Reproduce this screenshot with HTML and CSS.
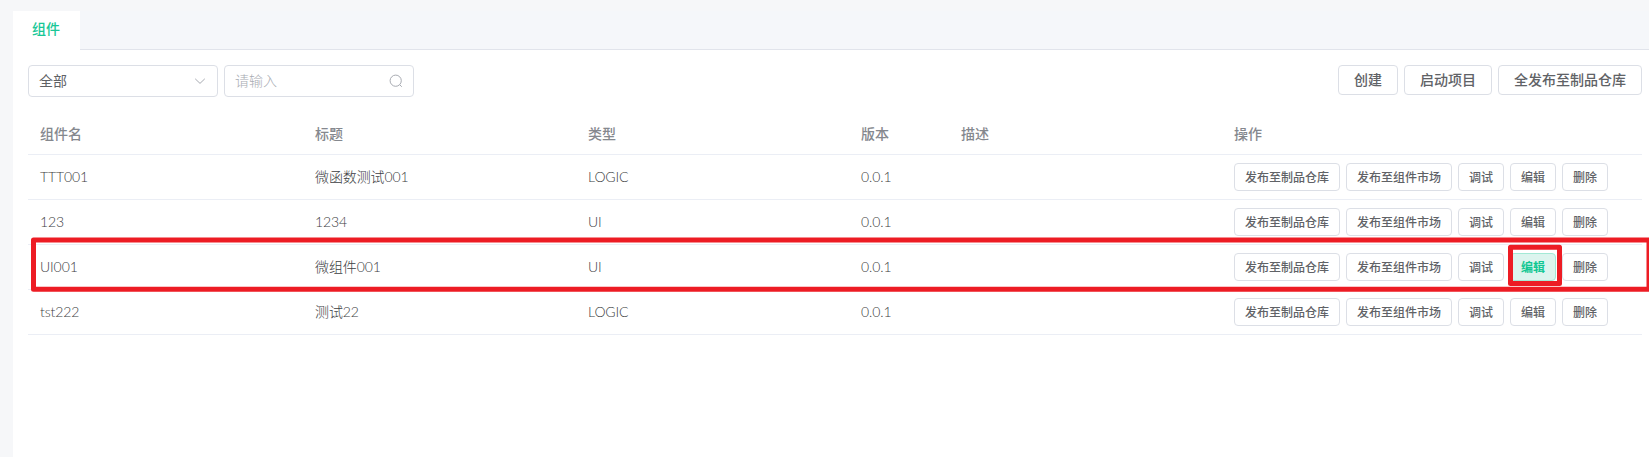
FILE: index.html
```html
<!DOCTYPE html>
<html lang="zh-CN">
<head>
<meta charset="utf-8">
<title>组件</title>
<link rel="stylesheet" href="styles.css">
</head>
<body>
<main class="panel">
  <nav class="tabs"><div class="tab">组件</div></nav>
  <section class="content">
    <div class="toolbar">
      <div class="field"><span>全部</span>
        <svg class="icon" viewBox="0 0 14 14"><path d="M2.2 4.8 7 9.4l4.8-4.6"/></svg>
      </div>
      <div class="field field-empty"><span>请输入</span>
        <svg class="icon" viewBox="0 0 14 14"><circle cx="6.7" cy="6.7" r="5.6"/><path d="m10.8 10.8 2 2"/></svg>
      </div>
      <div class="actions">
        <button class="btn">创建</button>
        <button class="btn">启动项目</button>
        <button class="btn">全发布至制品仓库</button>
      </div>
    </div>
    <div class="table">
      <div class="row head"><div>组件名</div><div>标题</div><div>类型</div><div>版本</div><div>描述</div><div>操作</div></div>
      <div class="row"><div>TTT001</div><div>微函数测试001</div><div>LOGIC</div><div>0.0.1</div><div></div>
        <div class="ops"><button class="btn small">发布至制品仓库</button><button class="btn small">发布至组件市场</button><button class="btn small">调试</button><button class="btn small">编辑</button><button class="btn small">删除</button></div></div>
      <div class="row"><div>123</div><div>1234</div><div>UI</div><div>0.0.1</div><div></div>
        <div class="ops"><button class="btn small">发布至制品仓库</button><button class="btn small">发布至组件市场</button><button class="btn small">调试</button><button class="btn small">编辑</button><button class="btn small">删除</button></div></div>
      <div class="row"><div>UI001</div><div>微组件001</div><div>UI</div><div>0.0.1</div><div></div>
        <div class="ops"><button class="btn small">发布至制品仓库</button><button class="btn small">发布至组件市场</button><button class="btn small">调试</button><button class="btn small active">编辑</button><button class="btn small">删除</button></div></div>
      <div class="row"><div>tst222</div><div>测试22</div><div>LOGIC</div><div>0.0.1</div><div></div>
        <div class="ops"><button class="btn small">发布至制品仓库</button><button class="btn small">发布至组件市场</button><button class="btn small">调试</button><button class="btn small">编辑</button><button class="btn small">删除</button></div></div>
    </div>
  </section>
</main>
<svg class="marks" viewBox="0 0 1649 457">
  <rect x="33.5" y="240" width="1615.5" height="49.3"/>
  <rect x="1510.5" y="247.2" width="49" height="36.3"/>
</svg>
</body>
</html>
```

FILE: styles.css
```css
* { box-sizing: border-box; }
body {
  margin: 0;
  height: 457px;
  overflow: hidden;
  padding: 11px 0 0 13px;
  background: #f6f7f9;
  color: #606266;
  font: 14px/20px Lato, "Noto Sans CJK SC", sans-serif;
}
.panel { height: 446px; background: #fff; }
.tabs {
  display: flex;
  height: 39px;
  background: #f5f7fa;
  border-bottom: 1px solid #e1e4eb;
}
.tab {
  width: 67px;
  height: 39px;
  padding: 8px 0 0 19px;
  background: #fff;
  color: #19c797;
  font-weight: 500;
}
.content { padding: 15px 7px 0 15px; }
.toolbar { display: flex; gap: 6px; }
.field {
  display: flex;
  align-items: center;
  justify-content: space-between;
  width: 190px;
  height: 32px;
  padding: 0 10px;
  border: 1px solid #dcdfe6;
  border-radius: 4px;
}
.field-empty { color: #a8abb2; font-weight: 300; }
.icon {
  width: 14px;
  height: 14px;
  fill: none;
  stroke: #a8abb2;
  stroke-width: 1;
}
.actions { display: flex; gap: 6px; margin-left: auto; }
.btn {
  height: 30px;
  padding: 0 15px;
  border: 1px solid #dcdfe6;
  border-radius: 4px;
  background: #fff;
  color: #606266;
  font: 500 14px/20px Lato, "Noto Sans CJK SC", sans-serif;
  white-space: nowrap;
}
.small { height: 28px; padding: 1px 10px 0; font-size: 12px; }
.active { background: #dcf4ee; border-color: #a3e9d5; color: #12c793; font-weight: 700; }
.table { margin-top: 17px; }
.row {
  display: grid;
  grid-template-columns: 275px 273px 273px 100px 273px 420px;
  align-items: center;
  height: 45px;
  border-bottom: 1px solid #ebeef5;
  color: #3c3e42;
  font-weight: 300;
  letter-spacing: -0.1px;
}
.row .btn { letter-spacing: 0; }
.row > div { padding: 0 12px; }
.head { height: 41px; color: #85888e; font-weight: 500; letter-spacing: 0; }
.row .ops { display: flex; gap: 6px; }
.marks {
  position: absolute;
  inset: 0;
  width: 1649px;
  height: 457px;
  fill: none;
  stroke: #ed1c24;
  stroke-width: 5;
  stroke-linejoin: round;
  pointer-events: none;
}
```
